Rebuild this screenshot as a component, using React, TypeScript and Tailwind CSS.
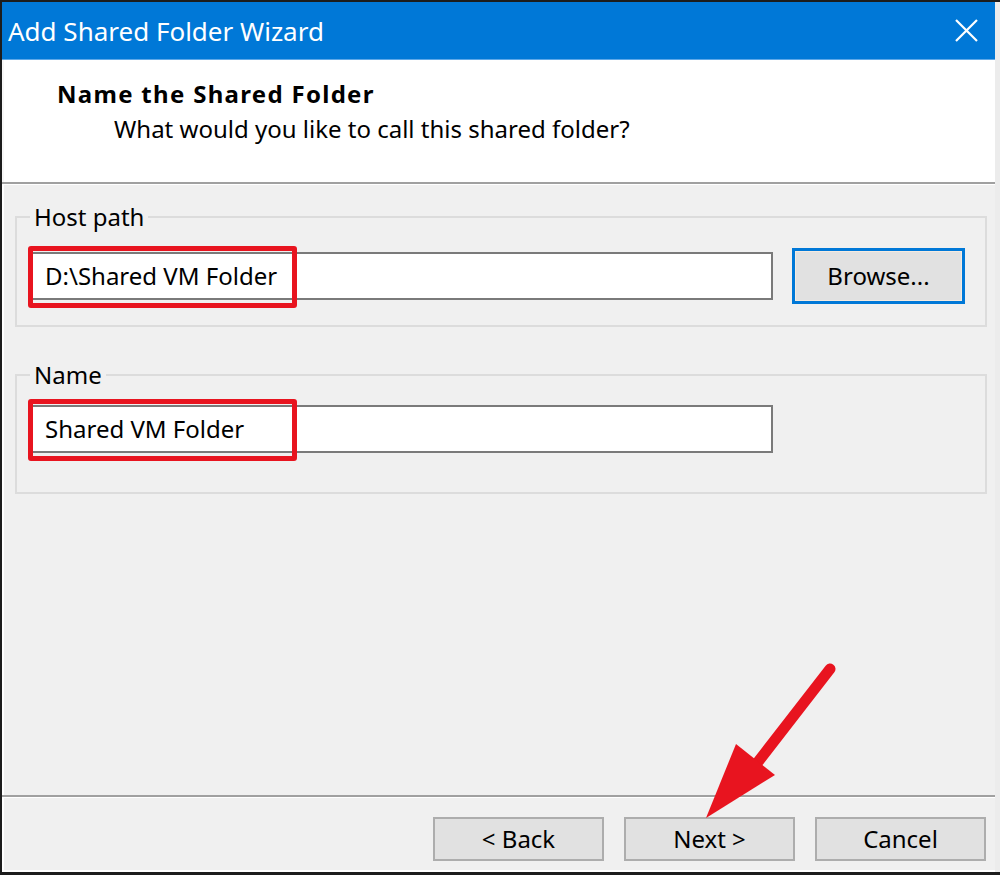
// Shared-folder wizard dialog (Windows 10 style)

const font = { fontFamily: '"Noto Sans", "Open Sans", sans-serif' };

function TextField({ value, highlight = false }: { value: string; highlight?: boolean }) {
  return (
    <div className="relative w-[743px] h-[48px] bg-white border-2 border-[#7a7a7a] flex items-center pl-[13px] text-[24px] text-black">
      {value}
      {highlight && (
        <div className="absolute left-[-4px] top-[-8px] w-[269px] h-[62px] border-[5px] border-[#e8141f] rounded-[3px] pointer-events-none" />
      )}
    </div>
  );
}

function GroupBox({ label, children, height }: { label: string; children: React.ReactNode; height: string }) {
  return (
    <div className={`relative ml-[11px] mr-[8px] border-2 border-[#dcdcdc] ${height}`}>
      <div className="absolute left-[13px] top-[-16px] bg-[#f0f0f0] px-[4px] text-[24px] leading-[30px] text-black">
        {label}
      </div>
      {children}
    </div>
  );
}

function WizardButton({ label }: { label: string }) {
  return (
    <button className="w-[171px] h-[44px] bg-[#e1e1e1] border-2 border-[#adadad] text-[24px] text-black flex items-center justify-center">
      {label}
    </button>
  );
}

export default function App() {
  return (
    <div className="w-[1000px] h-[875px] bg-[#1c1c1c] pt-[2px] pl-[2px] pb-[3px]" style={font}>
      <div className="relative h-full flex flex-col bg-[#f0f0f0] border-r-[5px] border-[#ececec]">
        {/* Title bar */}
        <div className="h-[58px] bg-[#0078d7] border-b border-[#5ea8e8] flex items-center justify-between pl-[6px] pr-[17px]">
          <span className="text-white text-[26px] leading-none">Add Shared Folder Wizard</span>
          <svg width="23" height="23" viewBox="0 0 23 23">
            <path d="M1 1 L22 22 M22 1 L1 22" stroke="white" strokeWidth="2.2" />
          </svg>
        </div>

        {/* Header */}
        <div className="h-[122px] bg-white border-l-2 border-[#f7f7f7] pt-[18px] pl-[53px]">
          <div className="text-[24px] font-bold leading-[32px] tracking-[1.3px] text-black">Name the Shared Folder</div>
          <div className="text-[24px] leading-[32px] text-black pl-[57px] mt-[3px]">
            What would you like to call this shared folder?
          </div>
        </div>
        <div className="h-[2px] bg-[#a0a0a0]" />
        <div className="h-px bg-white" />

        {/* Body */}
        <div className="flex-1 border-l-2 border-white pt-[31px]">
          <GroupBox label="Host path" height="h-[111px]">
            <div className="flex items-center pl-[13px] pt-[30px] gap-[19px]">
              <TextField value="D:\Shared VM Folder" highlight />
              <button className="w-[173px] h-[56px] border-[3px] border-[#0078d7] bg-[#e1e1e1] text-[24px] text-black flex items-center justify-center shadow-[inset_0_0_0_1px_#f5ebe0]">
                Browse...
              </button>
            </div>
          </GroupBox>
          <div className="h-[47px]" />
          <GroupBox label="Name" height="h-[120px]">
            <div className="pl-[13px] pt-[29px]">
              <TextField value="Shared VM Folder" highlight />
            </div>
          </GroupBox>
        </div>

        {/* Footer */}
        <div className="h-[2px] bg-[#a0a0a0]" />
        <div className="h-px bg-white" />
        <div className="h-[74px] border-l-2 border-white border-b-2 flex justify-end gap-[20px] pt-[19px] pr-[9px]">
          <WizardButton label="< Back" />
          <WizardButton label="Next >" />
          <WizardButton label="Cancel" />
        </div>

        {/* Annotation arrow */}
        <svg className="absolute left-0 top-0 pointer-events-none" width="998" height="870">
          <line x1="828" y1="667" x2="752" y2="765" stroke="#e8141f" strokeWidth="11" strokeLinecap="round" />
          <polygon points="734,742 773,773 704,816" fill="#e8141f" />
        </svg>
      </div>
    </div>
  );
}
